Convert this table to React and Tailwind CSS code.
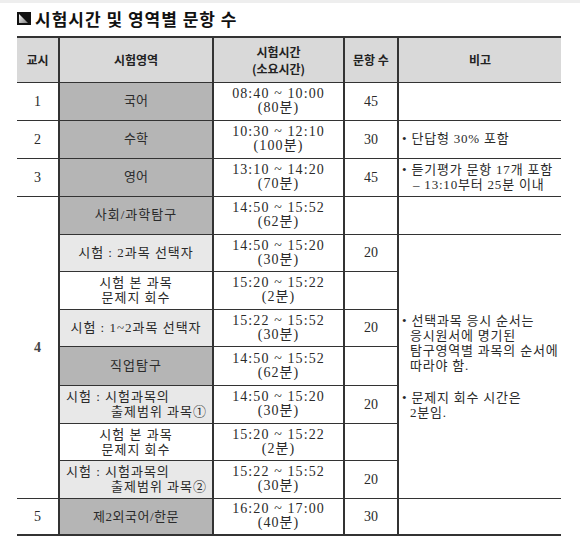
const serif = "font-['Liberation_Serif','Noto_Sans_CJK_KR',serif]";

const DARK = "bg-[#b5b5b5]";
const LIGHT = "bg-[#e8e8e8]";

const Time = ({ range, dur }) => (
  <div className="leading-[14px] text-[14px] tracking-[1.1px]">
    <div>{range}</div>
    <div>({dur})</div>
  </div>
);

const Header = ({ children, className = "" }) => (
  <th
    className={`border-b border-[#333] bg-[#d9d9d9] text-[12px] font-bold text-[#222] leading-[17px] font-['Noto_Sans_CJK_KR',sans-serif] ${className}`}
  >
    {children}
  </th>
);

const cell = "border-b border-[#333] text-center align-middle p-0";

const App = () => {
  const groupRows = [
    { subject: "사회/과학탐구", tone: DARK, range: "14:50 ~ 15:52", dur: "62분", count: "", h: "h-[38px]" },
    { subject: "시험 : 2과목 선택자", tone: LIGHT, range: "14:50 ~ 15:20", dur: "30분", count: "20", h: "h-[37px]" },
    { subject: ["시험 본 과목", "문제지 회수"], tone: "bg-white", range: "15:20 ~ 15:22", dur: "2분", count: "", h: "h-[38px]" },
    { subject: "시험 : 1~2과목 선택자", tone: LIGHT, range: "15:22 ~ 15:52", dur: "30분", count: "20", h: "h-[37px]" },
    { subject: "직업탐구", tone: DARK, range: "14:50 ~ 15:52", dur: "62분", count: "", h: "h-[39px]" },
    { subject: ["시험 : 시험과목의", "출제범위 과목①"], left: true, tone: LIGHT, range: "14:50 ~ 15:20", dur: "30분", count: "20", h: "h-[38px]" },
    { subject: ["시험 본 과목", "문제지 회수"], tone: "bg-white", range: "15:20 ~ 15:22", dur: "2분", count: "", h: "h-[37px]" },
    { subject: ["시험 : 시험과목의", "출제범위 과목②"], left: true, tone: LIGHT, range: "15:22 ~ 15:52", dur: "30분", count: "20", h: "h-[38px]" },
  ];

  const renderSubject = (r) => {
    if (!Array.isArray(r.subject)) {
      return <span className="tracking-[1px]">{r.subject}</span>;
    }
    if (r.left) {
      return (
        <div className="text-left pl-[6px] leading-[15px] tracking-[1px]">
          <div>{r.subject[0]}</div>
          <div className="pl-[45px]">{r.subject[1]}</div>
        </div>
      );
    }
    return (
      <div className="leading-[15px] tracking-[1px]">
        <div>{r.subject[0]}</div>
        <div>{r.subject[1]}</div>
      </div>
    );
  };

  return (
    <div className="w-[580px] h-[549px] bg-white text-[#2a2a2a]">
      <div className="h-[3px] bg-[#eeeeee]" />

      {/* title */}
      <div className="flex items-center gap-[4px] pl-[17px] pt-[7px] h-[24px]">
        <svg width="14" height="13" viewBox="0 0 14 13">
          <defs>
            <linearGradient id="g" x1="0" y1="0" x2="1" y2="1">
              <stop offset="0" stopColor="#ffffff" />
              <stop offset="1" stopColor="#7a7a7a" />
            </linearGradient>
          </defs>
          <rect width="14" height="13" fill="#111" />
          <polygon points="2,2 11,11 2,11" fill="url(#g)" />
        </svg>
        <h2 className="text-[17px] font-bold text-[#111] tracking-[1px] font-['Noto_Sans_CJK_KR',sans-serif]">
          시험시간 및 영역별 문항 수
        </h2>
      </div>

      {/* table */}
      <table
        className={`ml-[17px] mt-[9px] w-[544px] border-collapse table-fixed border-t-2 border-t-[#333] border-b-2 border-b-[#333] text-[13px] ${serif}`}
      >
        <colgroup>
          <col className="w-[42px]" />
          <col className="w-[154px]" />
          <col className="w-[131px]" />
          <col className="w-[54px]" />
          <col className="w-[163px]" />
        </colgroup>
        <thead>
          <tr className="h-[45px]">
            <Header>교시</Header>
            <Header className="border-l-2 border-l-[#333]">시험영역</Header>
            <Header className="border-l-2 border-l-[#333]">
              <div>시험시간</div>
              <div>(소요시간)</div>
            </Header>
            <Header className="border-l-2 border-l-[#333]">문항 수</Header>
            <Header className="border-l-2 border-l-[#333]">비고</Header>
          </tr>
        </thead>
        <tbody>
          {/* 1 */}
          <tr className="h-[38px]">
            <td className={`${cell} text-[14px]`}>1</td>
            <td className={`${cell} ${DARK} border-l-2 border-l-[#333]`}>국어</td>
            <td className={`${cell} border-l-2 border-l-[#333]`}>
              <Time range="08:40 ~ 10:00" dur="80분" />
            </td>
            <td className={`${cell} text-[14px] border-l-2 border-l-[#333]`}>45</td>
            <td className={`${cell} border-l-2 border-l-[#333]`}></td>
          </tr>
          {/* 2 */}
          <tr className="h-[38px]">
            <td className={`${cell} text-[14px]`}>2</td>
            <td className={`${cell} ${DARK} border-l-2 border-l-[#333]`}>수학</td>
            <td className={`${cell} border-l-2 border-l-[#333]`}>
              <Time range="10:30 ~ 12:10" dur="100분" />
            </td>
            <td className={`${cell} text-[14px] border-l-2 border-l-[#333]`}>30</td>
            <td className={`${cell} text-left pl-[3px] tracking-[0.8px] border-l-2 border-l-[#333]`}>
              • 단답형 30% 포함
            </td>
          </tr>
          {/* 3 */}
          <tr className="h-[38px]">
            <td className={`${cell} text-[14px]`}>3</td>
            <td className={`${cell} ${DARK} border-l-2 border-l-[#333]`}>영어</td>
            <td className={`${cell} border-l-2 border-l-[#333]`}>
              <Time range="13:10 ~ 14:20" dur="70분" />
            </td>
            <td className={`${cell} text-[14px] border-l-2 border-l-[#333]`}>45</td>
            <td className={`${cell} text-left pl-[3px] tracking-[0.8px] leading-[15px] border-l-2 border-l-[#333]`}>
              <div>• 듣기평가 문항 17개 포함</div>
              <div className="pl-[11px]">– 13:10부터 25분 이내</div>
            </td>
          </tr>
          {/* 4 */}
          {groupRows.map((r, i) => (
            <tr key={i} className={r.h}>
              {i === 0 && (
                <td rowSpan={8} className={`${cell} text-[14px] font-bold text-[#444]`}>
                  4
                </td>
              )}
              <td className={`${cell} ${r.tone} border-l-2 border-l-[#333]`}>{renderSubject(r)}</td>
              <td className={`${cell} border-l-2 border-l-[#333]`}>
                <Time range={r.range} dur={r.dur} />
              </td>
              <td className={`${cell} text-[14px] border-l-2 border-l-[#333]`}>{r.count}</td>
              {i === 0 && <td className={`${cell} border-l-2 border-l-[#333]`}></td>}
              {i === 1 && (
                <td
                  rowSpan={7}
                  className={`${cell} text-left pl-[3px] tracking-[0.8px] leading-[15px] border-l-2 border-l-[#333]`}
                >
                  <div>• 선택과목 응시 순서는</div>
                  <div className="pl-[8px]">응시원서에 명기된</div>
                  <div className="pl-[8px]">탐구영역별 과목의 순서에</div>
                  <div className="pl-[8px]">따라야 함.</div>
                  <div className="h-[17px]" />
                  <div>• 문제지 회수 시간은</div>
                  <div className="pl-[8px]">2분임.</div>
                </td>
              )}
            </tr>
          ))}
          {/* 5 */}
          <tr className="h-[37px]">
            <td className={`${cell} text-[14px]`}>5</td>
            <td className={`${cell} ${DARK} border-l-2 border-l-[#333] tracking-[0.5px]`}>제2외국어/한문</td>
            <td className={`${cell} border-l-2 border-l-[#333]`}>
              <Time range="16:20 ~ 17:00" dur="40분" />
            </td>
            <td className={`${cell} text-[14px] border-l-2 border-l-[#333]`}>30</td>
            <td className={`${cell} border-l-2 border-l-[#333]`}></td>
          </tr>
        </tbody>
      </table>
    </div>
  );
};

export default App;
